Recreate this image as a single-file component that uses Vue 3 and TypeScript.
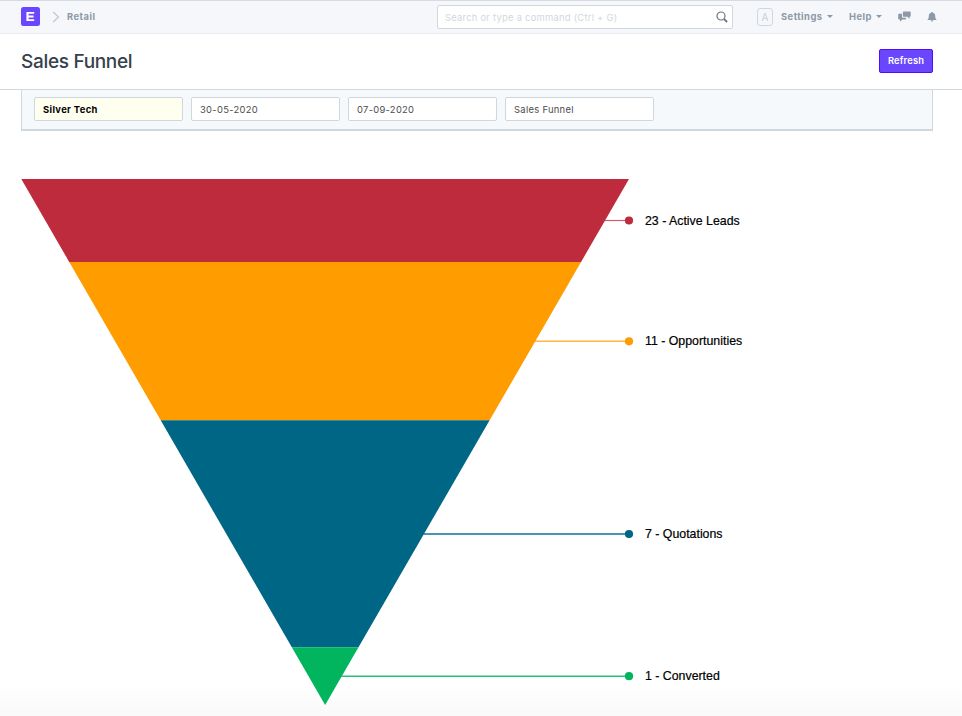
<script setup lang="ts">
interface Field {
  value: string
  required?: boolean
}

interface Stage {
  label: string
  color: string
  line: string
  top: number
  bottom: number
  lineY: number
  lineWidth: number
}

const fields: Field[] = [
  { value: 'Silver Tech', required: true },
  { value: '30-05-2020' },
  { value: '07-09-2020' },
  { value: 'Sales Funnel' },
]

const width = 607.7
const height = 526

const stages: Stage[] = [
  { label: '23 - Active Leads', color: '#bd2b3d', line: '#cf5f70', top: 0, bottom: 83, lineY: 41.5, lineWidth: 1.2 },
  { label: '11 - Opportunities', color: '#ff9c00', line: '#ffb643', top: 83, bottom: 241.3, lineY: 162.3, lineWidth: 1.5 },
  { label: '7 - Quotations', color: '#006685', line: '#4897b2', top: 241.3, bottom: 468.3, lineY: 355, lineWidth: 2 },
  { label: '1 - Converted', color: '#00b55e', line: '#26bf78', top: 468.3, bottom: 526, lineY: 497.2, lineWidth: 1.5 },
]

const inset = (y: number): number => (y / height) * (width / 2)

const points = (s: Stage): string =>
  [
    [inset(s.top), s.top],
    [width - inset(s.top), s.top],
    [width - inset(s.bottom), s.bottom],
    [inset(s.bottom), s.bottom],
  ]
    .map((p) => p.join(','))
    .join(' ')
</script>

<template>
  <div class="page">
    <header class="navbar">
      <div class="brand">
        <svg class="logo" viewBox="0 0 19 19">
          <rect width="19" height="19" rx="2.5" fill="#6a47ff" />
          <path d="M5.4 5h7.8v1.8H7.6v1.8h5v1.8h-5v1.9h5.6v1.8H5.400z" fill="#fff" />
        </svg>
        <svg class="chevron" viewBox="0 0 8 12">
          <path d="M1.2 1 6.5 6 1.2 11" fill="none" stroke="#c2c9d2" stroke-width="1.4" />
        </svg>
        <span class="crumb">Retail</span>
      </div>
      <div class="search">
        <span>Search or type a command (Ctrl + G)</span>
        <svg class="magnifier" viewBox="0 0 12 12">
          <circle cx="5" cy="5" r="4" fill="none" stroke="#6c7680" stroke-width="1.2" />
          <path d="m8 8 3.1 3" stroke="#6c7680" stroke-width="1.8" />
        </svg>
      </div>
      <nav class="menu">
        <span class="avatar">A</span>
        <span class="settings">Settings</span>
        <i class="caret"></i>
        <span class="help">Help</span>
        <i class="caret"></i>
        <svg class="chat" viewBox="0 0 13 11">
          <path d="M5.700.5h6.200q.8 0 .8.800v3.700q0 .8-.8.800h-.400v2L9.300 5.800H5.700q-.8 0-.8-.800V1.300q0-.8.8-.800z" fill="#8d99a6" />
          <path d="M1 2.800h3v3q0 1 1 1h3v1q0 .8-.8.800H4.300L2 10.700V8.600H1q-.8 0-.8-.8V3.600q0-.8.8-.8z" fill="#8d99a6" />
        </svg>
        <svg class="bell" viewBox="0 0 10 10">
          <path d="M4.300 0h1.400v.7C7.400 1 8.200 2.200 8.200 3.700c0 2 .3 3 1.500 4.200H.3C1.500 6.700 1.800 5.700 1.800 3.700 1.800 2.200 2.600 1 4.300.7zM3.700 8.300h2.600a1.300 1.300 0 0 1-2.600 0z" fill="#8d99a6" />
        </svg>
      </nav>
    </header>

    <div class="page-head">
      <h1>Sales Funnel</h1>
      <button class="refresh" type="button">Refresh</button>
    </div>

    <main class="content">
      <div class="filters">
        <div v-for="f in fields" :key="f.value" class="field" :class="{ required: f.required }">{{ f.value }}</div>
      </div>
      <svg class="funnel" viewBox="0 0 740 537" width="740" height="537">
        <g transform="translate(.3 0)">
          <template v-for="s in stages" :key="s.label">
            <line :x1="width - inset(s.lineY) - 0.5" :x2="width" :y1="s.lineY" :y2="s.lineY" :stroke="s.line" :stroke-width="s.lineWidth" />
            <polygon :points="points(s)" :fill="s.color" />
            <circle :cx="width" :cy="s.lineY" r="4.1" :fill="s.color" />
            <text x="623.7" :y="s.lineY + 4.05">{{ s.label }}</text>
          </template>
        </g>
      </svg>
    </main>
  </div>
</template>

<style>
body {
  margin: 0;
  background: #fff;
}
</style>

<style scoped>
.page {
  height: 716px;
  overflow: hidden;
  font-family: Inter, "Liberation Sans", sans-serif;
  background: linear-gradient(#fff 684px, #f9f9f9 716px);
}
.navbar {
  box-sizing: border-box;
  height: 34px;
  display: flex;
  align-items: center;
  border-top: 1px solid #d8dae2;
  border-bottom: 1px solid #e8eaf0;
  background: #f5f7fb;
  padding: 0 0 1px 21px;
  color: #8d99a6;
  font-size: 9.4px;
  font-weight: 700;
  letter-spacing: 0.46px;
}
.brand {
  display: flex;
  align-items: center;
  width: 416px;
}
.logo {
  width: 19px;
  height: 19px;
}
.chevron {
  width: 8px;
  height: 12px;
  margin: 0 7px 0 12px;
}
.search {
  box-sizing: border-box;
  width: 296px;
  height: 24px;
  padding: 0 4px 0 7px;
  display: flex;
  align-items: center;
  justify-content: space-between;
  border: 1px solid #d1d8dd;
  border-radius: 2px;
  background: #fff;
  color: #d1d8dd;
  font-weight: 400;
  letter-spacing: 0.25px;
}
.search span {
  padding-top: 1px;
}
.magnifier {
  width: 12px;
  height: 12px;
}
.menu {
  display: flex;
  align-items: center;
  margin-left: 24px;
}
.avatar {
  box-sizing: border-box;
  width: 16px;
  height: 18px;
  margin-right: 8px;
  border: 1px solid #d1d8dd;
  border-radius: 3px;
  color: #c9d0d6;
  font-size: 10px;
  font-weight: 400;
  line-height: 16px;
  letter-spacing: 0;
  text-align: center;
}
.settings {
  width: 45px;
}
.help {
  width: 26px;
  margin-left: 16px;
}
.caret {
  border: 3px solid transparent;
  border-top-color: #8d99a6;
  border-bottom: 0;
  margin-left: 1px;
}
.chat {
  width: 13px;
  height: 11px;
  margin-left: 16px;
}
.bell {
  width: 10px;
  height: 10px;
  margin-left: 16px;
}
.page-head {
  box-sizing: border-box;
  height: 56px;
  padding: 0 29px 0 21px;
  display: flex;
  align-items: center;
  justify-content: space-between;
  border-bottom: 1px solid #d1d8dd;
  background: #fff;
}
h1 {
  margin: 0;
  color: #36414c;
  font-size: 19px;
  font-weight: 500;
  letter-spacing: -0.32px;
}
.refresh {
  box-sizing: border-box;
  width: 54px;
  height: 24px;
  margin-bottom: 1px;
  padding: 0 0 1px;
  border: 1px solid #4f0dff;
  border-radius: 2px;
  background: #6a47ff;
  color: #fff;
  font-family: inherit;
  font-size: 9.3px;
  font-weight: 600;
  letter-spacing: 0.2px;
}
.content {
  padding: 0 29px 0 21px;
}
.filters {
  box-sizing: border-box;
  height: 41px;
  padding: 7px 12px 0;
  display: flex;
  gap: 8px;
  border: 1px solid #d1d8dd;
  border-top: 0;
  border-bottom-width: 2px;
  background: #f5f9fc;
}
.field {
  box-sizing: border-box;
  width: 149px;
  height: 24px;
  padding: 0 8px;
  border: 1px solid #d1d8dd;
  border-radius: 2px;
  background: #fff;
  color: #4c4c4c;
  font-size: 9.4px;
  line-height: 23px;
  letter-spacing: 0.3px;
}
.required {
  background: #fffff0;
  color: #000;
  font-weight: 700;
  letter-spacing: 0.35px;
}
.funnel {
  display: block;
  margin-top: 48px;
}
.funnel text {
  fill: #000;
  font-family: "Liberation Sans", sans-serif;
  font-size: 12.35px;
  stroke: #000;
  stroke-width: 0.2px;
}
</style>
